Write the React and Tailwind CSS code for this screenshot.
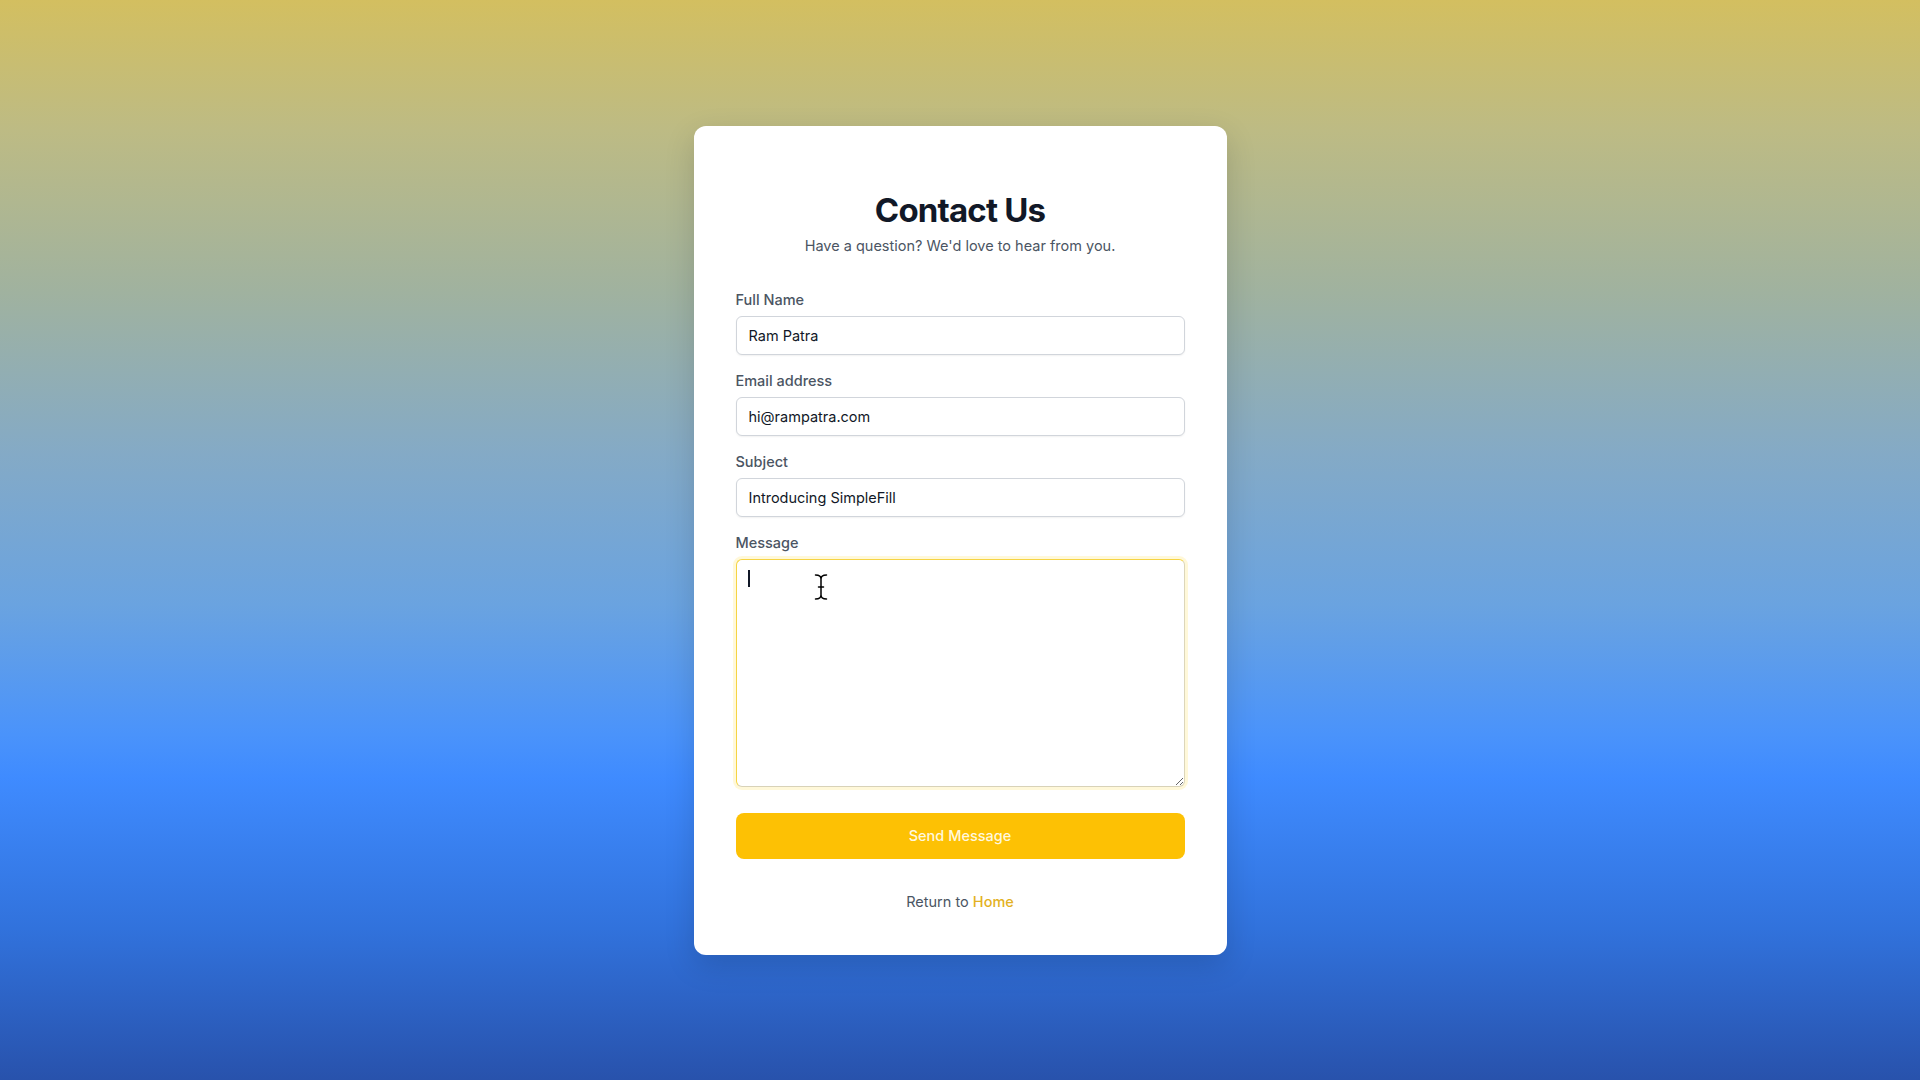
import React from "react";

const fields = [
  { label: "Full Name", value: "Ram Patra", type: "text" },
  { label: "Email address", value: "hi@rampatra.com", type: "email" },
  { label: "Subject", value: "Introducing SimpleFill", type: "text" },
];

const IBeam = () => (
  <svg width="16" height="28" viewBox="0 0 16 28" className="absolute left-[77px] top-[14px] pointer-events-none">
    <path d="M2.5 2 Q8 2 8 6 Q8 2 13.5 2 M8 6 V22 Q8 26 2.5 26 M8 22 Q8 26 13.5 26 M5.5 14 H10.5" fill="none" stroke="#fff" strokeWidth="3.4" strokeLinecap="round" />
    <path d="M2.5 2 Q8 2 8 6 Q8 2 13.5 2 M8 6 V22 Q8 26 2.5 26 M8 22 Q8 26 13.5 26 M5.5 14 H10.5" fill="none" stroke="#000" strokeWidth="1.5" strokeLinecap="round" />
  </svg>
);

export default function App() {
  return (
    <div className="min-h-screen w-full flex items-center justify-center font-['Inter','Noto_Sans',sans-serif] bg-[linear-gradient(to_bottom,#d3bf60_0%,#bdbb84_12%,#a0b29f_27%,#84aac6_42%,#6aa3e0_56%,#4a93fb_68%,#3f8bff_72%,#3172dc_86%,#2852ac_100%)]">
      <div className="w-[533px] bg-white rounded-xl shadow-[0_10px_30px_rgba(0,0,0,0.15)] px-[42px] pt-[64px] pb-[43px]">
        {/* Header */}
        <div className="text-center">
          <h1 className="text-[33px] leading-[40px] font-bold text-[#111827] tracking-tight">Contact Us</h1>
          <p className="mt-[6px] text-[14.5px] leading-5 text-[#4b5563]">Have a question? We'd love to hear from you.</p>
        </div>

        {/* Form */}
        <form className="mt-[34px] flex flex-col gap-4" onSubmit={(e) => e.preventDefault()}>
          {fields.map((f) => (
            <div key={f.label}>
              <label className="block text-[14.5px] leading-5 font-medium text-[#4b5563]">{f.label}</label>
              <input
                type={f.type}
                defaultValue={f.value}
                className="mt-[6px] w-full h-[39px] px-3 text-[14.5px] text-[#111827] bg-white border border-[#d1d5db] rounded-md shadow-[0_1px_2px_rgba(0,0,0,0.06)] outline-none"
              />
            </div>
          ))}

          <div>
            <label className="block text-[14.5px] leading-5 font-medium text-[#4b5563]">Message</label>
            <div className="relative mt-[6px]">
              <textarea
                className="block w-full h-[228px] px-3 py-2 text-[14.5px] text-[#111827] bg-white border border-[#f6d443] border-b-[#d8d2b8] border-r-[#dcd6ba] rounded-md shadow-[0_0_0_3px_rgba(254,240,170,0.45)] outline-none resize-y"
              />
              <span className="absolute left-[12px] top-[11px] w-[2px] h-[17px] bg-[#111827]" />
              <IBeam />
            </div>
          </div>

          <button
            type="submit"
            className="mt-[10px] w-full h-[46px] rounded-lg bg-[#fdc104] text-[14.5px] font-medium text-[#fff8de]"
          >
            Send Message
          </button>
        </form>

        <p className="mt-[33px] text-center text-[14.5px] leading-5 text-[#4b5563]">
          Return to <a href="#" className="text-[#e3b123] font-medium">Home</a>
        </p>
      </div>
    </div>
  );
}
